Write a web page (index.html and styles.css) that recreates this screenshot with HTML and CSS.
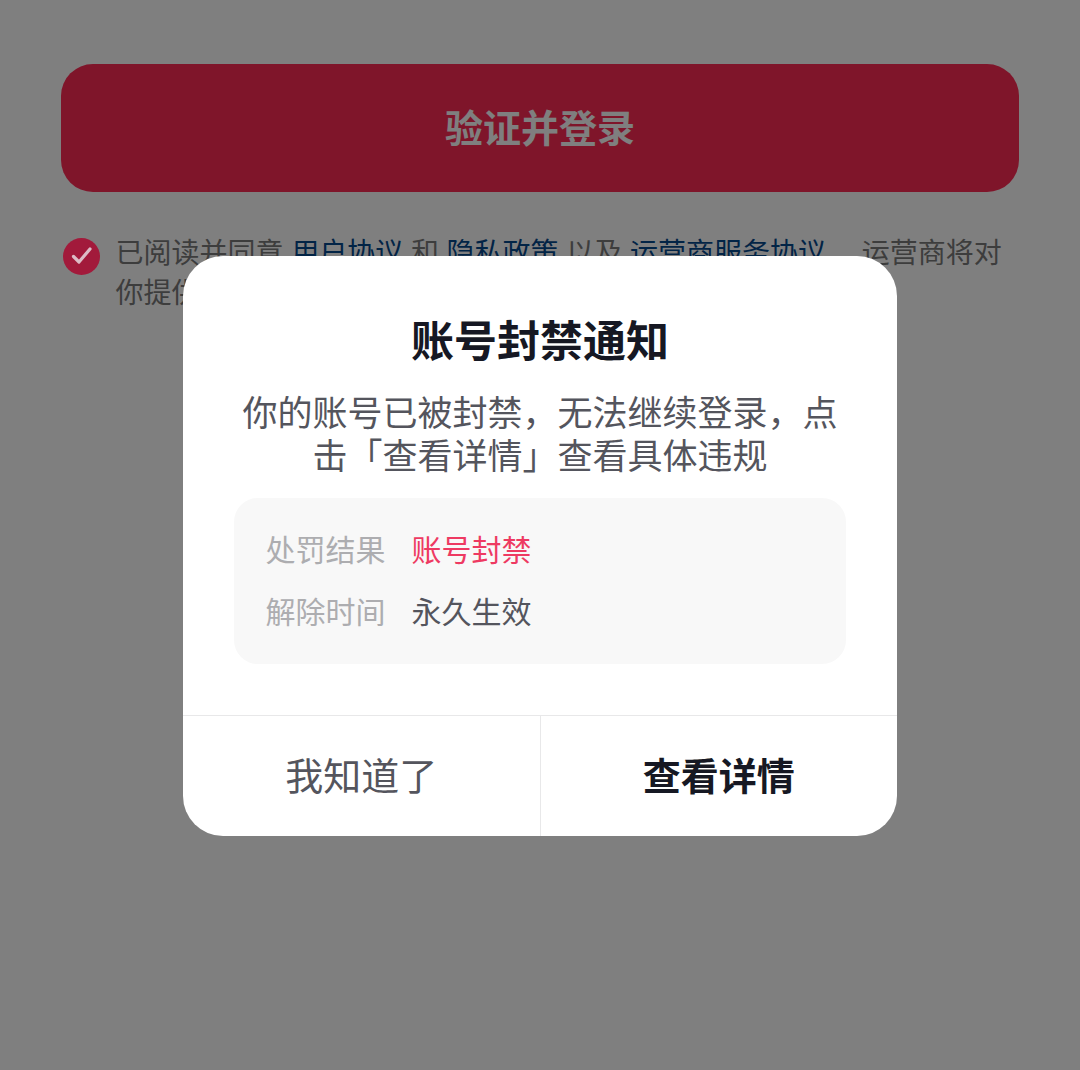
FILE: index.html
```html
<!DOCTYPE html>
<html lang="zh-CN">
<head>
<meta charset="utf-8">
<title>账号封禁通知</title>
<link rel="stylesheet" href="styles.css">
</head>
<body>
<main class="page">
  <button class="login"><span class="login-label">验证并登录</span></button>
  <div class="agree">
    <svg class="check" viewBox="0 0 37 37" width="37" height="37"><circle cx="18.5" cy="18.5" r="18.5" fill="#a21a3b"/><path d="M10.500 18.500l5.500 5.500L27 11" fill="none" stroke="#dcbcc6" stroke-width="3.200" stroke-linecap="round" stroke-linejoin="round"/></svg>
    <p class="agree-text">已阅读并同意 <a>用户协议</a> 和 <a>隐私政策</a> 以及 <a>运营商服务协议</a> ，运营商将对你提供的信息进行验证</p>
  </div>
</main>
<div class="overlay"></div>
<section class="dialog">
  <div class="body">
    <h1 class="title">账号封禁通知</h1>
    <p class="desc">你的账号已被封禁，无法继续登录，点击「查看详情」查看具体违规</p>
    <div class="info">
      <div class="row"><span class="label">处罚结果</span><span class="val red">账号封禁</span></div>
      <div class="row"><span class="label">解除时间</span><span class="val">永久生效</span></div>
    </div>
  </div>
  <div class="actions">
    <div class="btn"><span class="btn-label">我知道了</span></div>
    <div class="btn strong"><span class="btn-label">查看详情</span></div>
  </div>
</section>
</body>
</html>
```
FILE: styles.css
```css
* { box-sizing: border-box; }
html, body { margin: 0; height: 100%; }
body { width: 1080px; height: 1070px; background: #fff; overflow: hidden; position: relative; font-family: "Noto Sans CJK SC", "Noto Sans", sans-serif; }
.page { padding: 64px 61px 0; }
.login { display: block; width: 958px; height: 128px; padding: 0 0 4px; border: 0; border-radius: 32px; background: #ff2a55; color: #fff; font: 700 38px/124px "Noto Sans CJK SC", sans-serif; }
.agree { display: flex; gap: 15.500px; margin-top: 40px; padding-left: 2px; }
.check { flex: none; margin-top: 6px; position: relative; z-index: 4; }
.agree-text { margin: -1px 0 0; font-size: 28px; line-height: 40px; color: #7b7b7b; word-spacing: 1.400px; }
.agree-text a { color: #04498d; }
.overlay { position: absolute; inset: 0; background: rgba(0,0,0,.5); z-index: 3; }
.dialog { position: absolute; left: 183px; top: 256px; width: 714px; height: 580px; background: #fff; border-radius: 40px; z-index: 4; display: flex; flex-direction: column; overflow: hidden; }
.body { flex: 1; padding: 52px 51px 0; text-align: center; }
.title { margin: 0; font-size: 43px; line-height: 60px; font-weight: 700; color: #161823; }
.desc { margin: 21px 0 0; font-size: 35px; line-height: 43px; color: #54555d; }
.info { margin-top: 23px; height: 166px; padding: 29px 32px 0 31.500px; background: #f8f8f8; border-radius: 24px; text-align: left; display: flex; flex-direction: column; gap: 20px; }
.row { display: flex; gap: 26px; font-size: 30px; line-height: 42px; }
.label { color: #adadb0; }
.val { color: #54555d; }
.red { color: #ee3a62; }
.actions { height: 121px; border-top: 1px solid #e8e8e9; display: flex; }
.btn { flex: 1; display: flex; align-items: center; justify-content: center; font-size: 38px; color: #54555d; }
.btn-label { margin-top: -6px; }
.btn + .btn { border-left: 1px solid #e8e8e9; }
.strong { font-weight: 700; color: #161823; }
```
